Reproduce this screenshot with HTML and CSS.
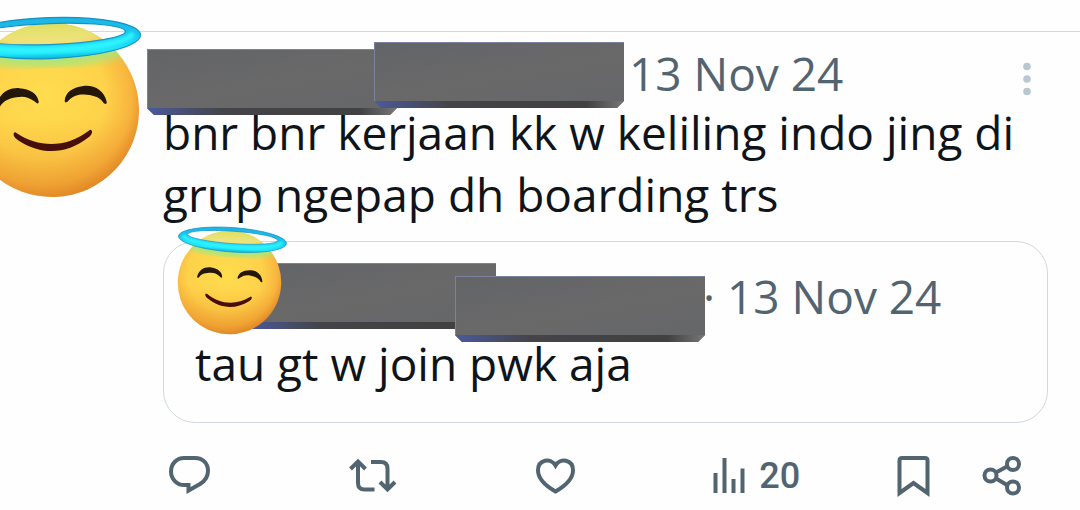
FILE: index.html
```html
<!DOCTYPE html>
<html lang="id">
  <head>
    <title>Post</title>
    <meta charset="utf-8">
    <link rel="stylesheet" href="styles.css">
  </head>
  <body>

  <!-- shared face, used by both stickers -->
  <svg class="defs" width="0" height="0" aria-hidden="true">
    <defs>
      <radialGradient id="skin" cx="0.45" cy="0.42" r="0.6">
        <stop offset="0" stop-color="#ffdc4e"/>
        <stop offset="0.6" stop-color="#fed24a"/>
        <stop offset="0.85" stop-color="#f8b43d"/>
        <stop offset="1" stop-color="#e28a26"/>
      </radialGradient>
      <linearGradient id="shade" x1="0" y1="0" x2="0" y2="1">
        <stop offset="0.55" stop-color="#e98f26" stop-opacity="0"/>
        <stop offset="1" stop-color="#dd7f22" stop-opacity="0.45"/>
      </linearGradient>
      <linearGradient id="dome" x1="0" y1="0" x2="0" y2="1">
        <stop offset="0" stop-color="#d8df5c"/>
        <stop offset="1" stop-color="#f6e488"/>
      </linearGradient>
      <linearGradient id="ring" x1="0" y1="0" x2="0" y2="1">
        <stop offset="0" stop-color="#1cb4e4"/>
        <stop offset="0.5" stop-color="#17c8ee"/>
        <stop offset="0.85" stop-color="#1fe6fa"/>
        <stop offset="1" stop-color="#0cb6de"/>
      </linearGradient>
      <filter id="soft" x="-20%" y="-60%" width="140%" height="220%">
        <feGaussianBlur stdDeviation="4"/>
      </filter>
      <filter id="gloss" x="-10%" y="-60%" width="120%" height="220%">
        <feGaussianBlur stdDeviation="1.5"/>
      </filter>
      <clipPath id="head"><circle r="87"/></clipPath>
      <symbol id="angel" viewBox="-95 -95 190 190">
        <circle r="87" fill="url(#skin)"/>
        <circle r="87" fill="url(#shade)"/>
        <g clip-path="url(#head)">
          <ellipse cx="0" cy="-77" rx="60" ry="14" fill="url(#dome)" filter="url(#soft)"/>
          <path d="M-80-60Q0-38 80-60" fill="none" stroke="#a9e67c" stroke-width="12" filter="url(#soft)"/>
        </g>
        <path fill="url(#ring)" stroke="#1690c6" stroke-width="1.2" fill-rule="evenodd" d="M-91-72A91 20.500 0 0 1 91-72A91 20.500 0 0 1-91-72ZM-76-76A76 10.500 0 0 0 76-76A76 10.500 0 0 0-76-76Z"/>
        <path fill="none" stroke="#2df4ff" stroke-width="6" stroke-linecap="round" filter="url(#gloss)" d="M-82-72C-66-56 66-56 82-72"/>
        <path fill="#241708" d="M-55-6C-53-18-43-24-32-23C-21-22-14-17-13-9C-13-6-15-7-17-9C-23-14-28-15-35-14C-44-13-49-10-52-5Q-55-3-55-6ZM55-6C53-18 43-24 32-23C21-22 14-17 13-9C13-6 15-7 17-9C23-14 28-15 35-14C44-13 49-10 52-5Q55-3 55-6Z"/>
        <path fill="#470f0b" d="M-39 22C-40 24-38 27-35 29C-13 45 13 45 35 29C38 27 40 24 39 22Q38 20 36 22C14 38-14 38-36 22Q-38 20-39 22Z"/>
      </symbol>
    </defs>
  </svg>

  <article class="post">
    <svg class="sticker sticker-lg" aria-hidden="true"><use href="#angel"/></svg>

    <header class="byline">
      <div class="name">
        <span class="bar bar-a"></span>
        <span class="bar bar-b"></span>
      </div>
      <time>13 Nov 24</time>
      <button class="more" type="button" aria-label="More">
        <svg width="42" height="42" viewBox="0 0 42 42"><circle cx="21" cy="8.500" r="3.800"/><circle cx="21" cy="21" r="3.800"/><circle cx="21" cy="33.500" r="3.800"/></svg>
      </button>
    </header>

    <p class="text">bnr bnr kerjaan kk w keliling indo jing di grup ngepap dh boarding trs</p>

    <section class="quote">
      <div class="byline">
        <div class="name">
          <span class="bar bar-c"></span>
          <span class="bar bar-d"></span>
        </div>
        <time>· 13 Nov 24</time>
      </div>
      <p class="text">tau gt w join pwk aja</p>
      <svg class="sticker sticker-sm" aria-hidden="true"><use href="#angel"/></svg>
    </section>

    <footer class="actions">
      <button type="button" aria-label="Reply">
        <svg width="52" height="48" viewBox="0 0 52 48"><path d="M21 8H32C40 8 45 13.500 45 21C45 27 42 31 37 34L25.500 40.500V35H21C14 35 8 29 8 21.500C8 13.500 14 8 21 8Z"/></svg>
      </button>
      <button type="button" aria-label="Repost">
        <svg width="52" height="48" viewBox="0 0 52 48"><path d="M4.500 19L12 11.500L19.500 19M12 12V33Q12 39.500 18.500 39.500H28.500M25 12H35Q41.500 12 41.500 18.500V39M34 32L41.500 39.500L49 32"/></svg>
      </button>
      <button type="button" aria-label="Like">
        <svg width="52" height="48" viewBox="0 0 52 48"><path d="M26.500 15.500C22 7.500 9 9 9 20.500C9 29 17 36 26.500 41.500C36 36 44 29 44 20.500C44 9 31 7.500 26.500 15.500Z"/></svg>
      </button>
      <button type="button" aria-label="Views">
        <svg width="40" height="48" viewBox="0 0 40 48"><path d="M4.500 23V43M13.500 8V43M22.500 29V43M31.500 18.500V43"/></svg>
        <span>20</span>
      </button>
      <button type="button" aria-label="Bookmark">
        <svg width="40" height="48" viewBox="0 0 40 48"><path d="M5.500 43V10.500Q5.500 8 8 8H31Q33.500 8 33.500 10.500V43L19.500 33Z"/></svg>
      </button>
      <button type="button" aria-label="Share">
        <svg width="42" height="48" viewBox="0 0 42 48"><path d="M14 22.500L25 16.500M14 28.500L25 35"/><circle cx="8.500" cy="25.500" r="6"/><circle cx="31" cy="14" r="6"/><circle cx="31" cy="37.500" r="6"/></svg>
      </button>
    </footer>
  </article>

  </body>
</html>
```
FILE: styles.css
```css
body {
  margin: 0;
  padding-top: 31px;
  background: #fefefe;
  color: #0f1419;
  font-family: "Open Sans", "Noto Sans", sans-serif;
  font-size: 46px;
  line-height: 62px;
}

.defs {
  position: absolute;
}

.post {
  position: relative;
  border-top: 1px solid #cfd9de;
  padding: 13px 32px 0 163px;
}

.byline {
  display: flex;
  color: #536471;
  line-height: 56px;
}

.name {
  position: relative;
  flex: none;
  width: 466px;
}

.text {
  margin: 0;
}

.more {
  display: flex;
  align-items: center;
  margin-left: auto;
  padding: 12px 0 0;
  border: 0;
  background: none;
}

.more svg {
  fill: #b9c8d0;
}

/* blocks covering the names */
.bar {
  position: absolute;
  width: 250px;
  height: 66px;
  background:
    linear-gradient(90deg, #4a5a9c, #444449 30%, #414141 85%, #777) 0 59px / 100% 7px no-repeat,
    linear-gradient(170deg, #636466, #69696a 50%, #656668);
  box-shadow: inset 1px 1px 0 #7b82a0;
  clip-path: polygon(0 0, 100% 0, 100% 59px, calc(100% - 7px) 100%, 7px 100%, 0 59px);
}

.bar-a {
  left: -16px;
  top: 4px;
}

.bar-b {
  left: 211px;
  top: -3px;
}

.bar-c {
  left: 51px;
  top: -5px;
}

.bar-d {
  left: 260px;
  top: 8px;
}

.sticker {
  position: absolute;
}

.sticker-lg {
  left: -43px;
  top: -17px;
  width: 190px;
  height: 190px;
  transform: rotate(-2deg);
}

.sticker-sm {
  left: 9px;
  top: -16px;
  width: 113px;
  height: 113px;
  transform: rotate(4deg);
}

.quote {
  position: relative;
  margin-top: 16px;
  padding: 26px 31px 28px;
  border: 1px solid #cfd9de;
  border-radius: 32px;
}

.quote .name {
  width: 508px;
}

.quote .byline {
  margin-bottom: 8px;
}

.actions {
  display: grid;
  grid-template-columns: repeat(4, 1fr) 88px 66px;
  margin-top: 25px;
}

.actions button {
  display: flex;
  align-items: center;
  gap: 8px;
  padding: 0;
  border: 0;
  background: none;
  color: #536471;
  font: 500 36px/48px Roboto, "Open Sans", sans-serif;
}

.actions span {
  padding-top: 4px;
}

.actions svg {
  fill: none;
  stroke: #536471;
  stroke-width: 4;
}
```
